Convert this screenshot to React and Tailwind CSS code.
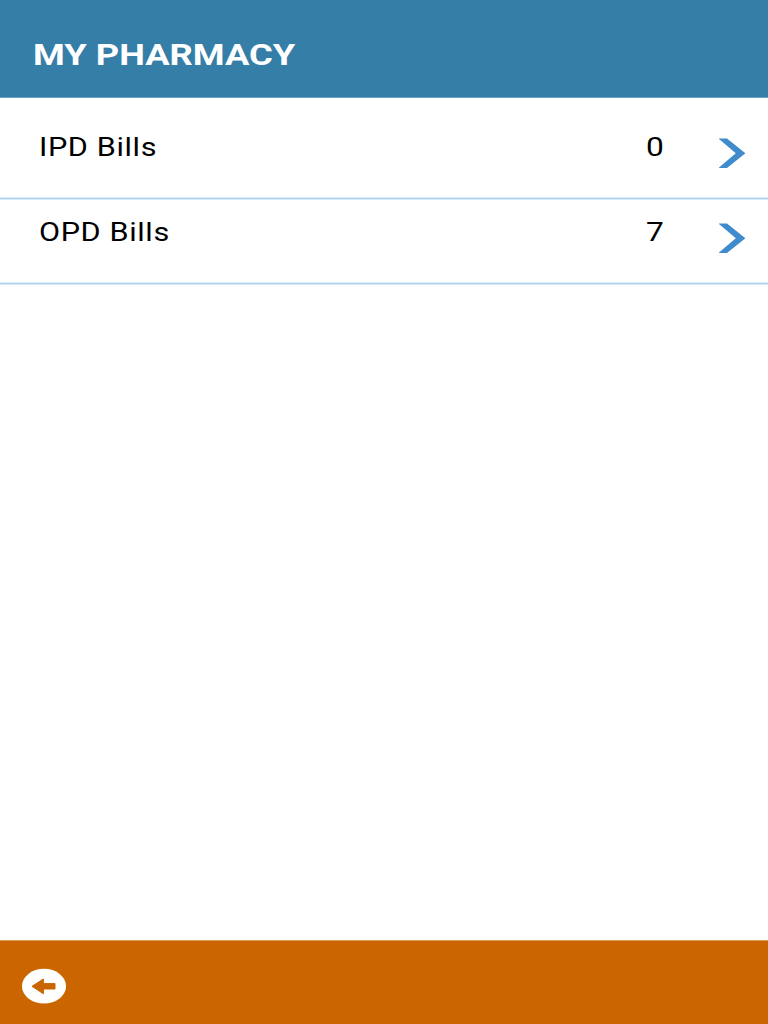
import clsx from "clsx";

const BILLS = [
  { id: "ipd", label: "IPD Bills", count: 0 },
  { id: "opd", label: "OPD Bills", count: 7 },
];

function Chevron() {
  return (
    <svg className="w-[27px] h-[30px] shrink-0" viewBox="0 0 27 30" fill="#3f8bcb">
      <path d="M-0.6 0.4 H8 L26.4 15.2 L8 29.9 H-0.6 L16.8 15.2 Z" />
    </svg>
  );
}

function BillRow({ label, count, first }) {
  return (
    <button
      className={clsx(
        "flex w-full items-start border-b border-[#a9d0ee] pl-[38.5px] pr-[22px] text-left shadow-[0_1px_0_#d9ebf8,inset_0_-1px_0_#e0f0fb]",
        first ? "h-[101px] pt-[35px]" : "h-[85px] pt-[19px]"
      )}
    >
      <span className="flex-1 text-[25px] leading-[30px] text-black">
        <span className="inline-block origin-left scale-x-[1.225] tracking-[0.5px]">{label}</span>
      </span>
      <span className="w-[73px] text-[25px] leading-[30px] text-black">
        <span className="inline-block origin-left scale-x-[1.27]">{count}</span>
      </span>
      <span className="mt-[5px]">
        <Chevron />
      </span>
    </button>
  );
}

export default function App() {
  return (
    <div className="flex h-screen flex-col overflow-hidden bg-white font-['Roboto',sans-serif]">
      <header className="h-[98px] shrink-0 border-b border-[#6ba1c4] bg-[#357ea8] pl-[32.5px] pt-[38px]">
        <h1 className="inline-block origin-left scale-x-[1.252] text-[29px] leading-[34px] font-bold text-white">
          MY PHARMACY
        </h1>
      </header>

      <main className="flex-1">
        {BILLS.map((bill, i) => (
          <BillRow key={bill.id} label={bill.label} count={bill.count} first={i === 0} />
        ))}
      </main>

      <footer className="flex h-[84px] shrink-0 items-start border-t border-[#df9a5c] bg-[#cb6500] pl-[22px] pt-[27px]">
        <button aria-label="Back">
          <svg className="block h-[36px] w-[44px]" viewBox="0 0 44 36">
            <ellipse cx="22" cy="18.2" rx="22" ry="17.4" fill="#fff" />
            <path
              d="M10 18.3 L21.4 11 V15.6 H33 V21 H21.4 V25.8 Z"
              fill="#cb6500"
              stroke="#cb6500"
              strokeWidth="1"
              strokeLinejoin="round"
            />
          </svg>
        </button>
      </footer>
    </div>
  );
}
